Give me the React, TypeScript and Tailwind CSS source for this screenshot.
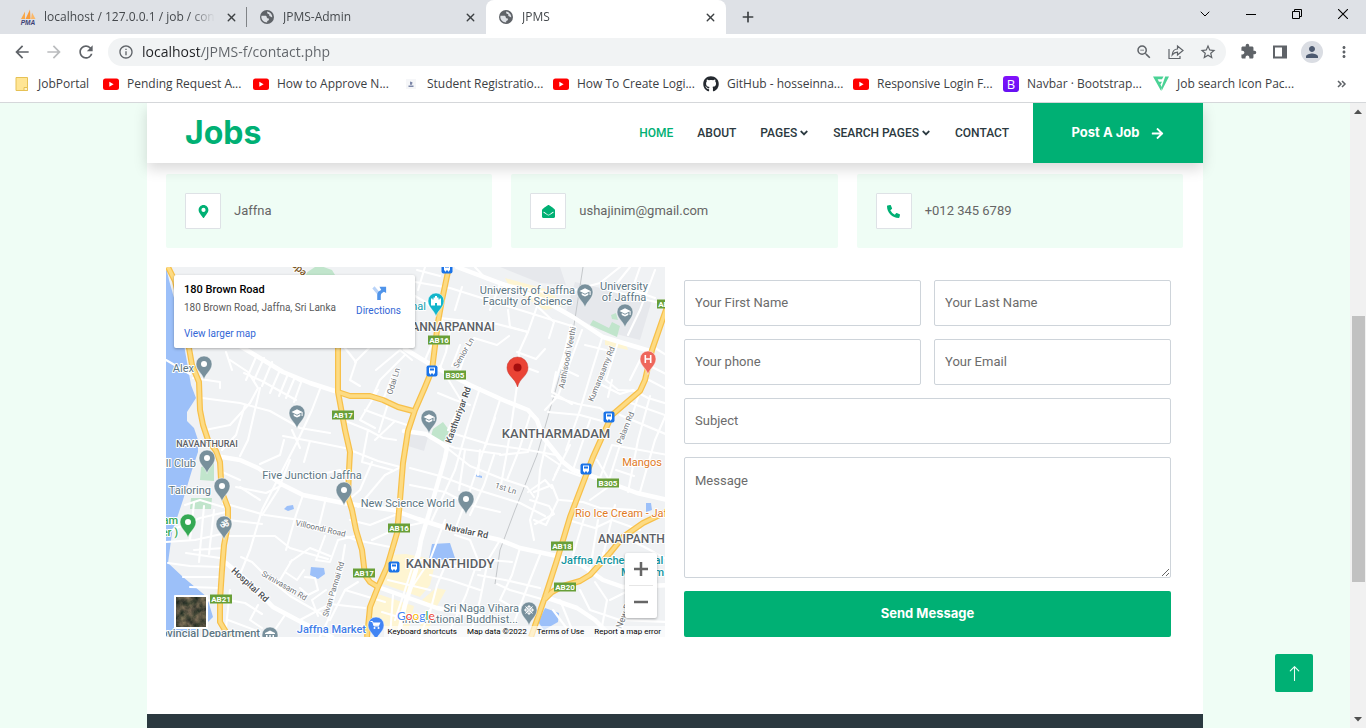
import type { ReactNode } from 'react';
import {
  MdArrowBack,
  MdArrowForward,
  MdRefresh,
  MdInfoOutline,
  MdZoomOut,
  MdStarBorder,
  MdExtension,
  MdPerson,
  MdMoreVert,
} from 'react-icons/md';
import { FaAngleDown, FaArrowRight, FaEnvelopeOpen, FaGithub, FaMapMarkerAlt, FaPhoneAlt } from 'react-icons/fa';
import { BsArrowUp } from 'react-icons/bs';
import { ChevronDown, Plus, X } from 'lucide-react';

/* ---------- Browser chrome ---------- */

function PmaIcon() {
  return (
    <svg viewBox="0 0 16 16" className="size-4 shrink-0" aria-hidden="true">
      <path d="M1 10 L5 2.500 L5 10 Z" fill="#f9a94b" />
      <path d="M5.500 10 L10 0.500 L10.500 10 Z" fill="#f89c3c" />
      <path d="M11 10 L12 3.500 L15.500 10 Z" fill="#fbb869" />
      <text x="8" y="15.500" textAnchor="middle" fontSize="6.500" fontWeight="700" fontStyle="italic" fill="#3b3f75" fontFamily="Liberation Sans, sans-serif">
        PMA
      </text>
    </svg>
  );
}

function GlobeIcon() {
  return (
    <svg viewBox="0 0 16 16" className="size-4 shrink-0" aria-hidden="true">
      <circle cx="8" cy="8" r="7" fill="#5f6368" />
      <path
        d="M2.500 6.800h3.700c1 0 1.600.6 1.600 1.500 0 .7.500 1.100 1.200 1.100h.9v1.200c0 .8-.8 1.400-1.700 1.400v1.500C4.800 13.400 2.400 11 2.300 8zM8.200 2.600c-.2 1.500.2 2.300 1.300 2.400.8.100.9.700.8 1.300-.1.800.4 1.100 1.100 1.100.9 0 1 .9 1.900.9 0-2.900-2-5.200-5.100-5.700z"
        fill="#dee1e6"
      />
    </svg>
  );
}

function Tab({ icon, title, active = false, divider = false }: { icon: ReactNode; title: string; active?: boolean; divider?: boolean }) {
  return (
    <div
      className={
        active
          ? 'flex h-[34px] w-60 items-center gap-2 rounded-t-lg bg-white pr-2 pl-3'
          : 'relative flex h-[34px] w-[239px] items-center gap-2 pr-2 pl-3'
      }
    >
      {icon}
      <span className="min-w-0 flex-1 overflow-hidden whitespace-nowrap text-xs text-[#45494d] [mask-image:linear-gradient(90deg,#000_85%,transparent)]">
        {title}
      </span>
      <button type="button" aria-label={'Close ' + title} className="flex size-4 items-center justify-center text-[#3c4043]">
        <X size={13} strokeWidth={2.5} />
      </button>
      {divider && <span className="absolute top-[7px] right-0 h-5 w-px bg-[#808387]" />}
    </div>
  );
}

function TabStrip() {
  return (
    <div className="flex h-[34px] bg-[#dee1e6] pl-2">
      <Tab icon={<PmaIcon />} title="localhost / 127.0.0.1 / job / contact" divider />
      <Tab icon={<GlobeIcon />} title="JPMS-Admin" />
      <Tab icon={<GlobeIcon />} title="JPMS" active />
      <button type="button" aria-label="New tab" className="flex w-11 items-center justify-center text-[#3c4043]">
        <Plus size={16} strokeWidth={2.5} />
      </button>
      <div className="ml-auto flex h-7 text-black">
        <button type="button" aria-label="Search tabs" className="flex w-[46px] items-center justify-center">
          <ChevronDown size={16} strokeWidth={1.5} />
        </button>
        <button type="button" aria-label="Minimize" className="flex w-[46px] items-center justify-center">
          <svg viewBox="0 0 10 10" className="size-[10px]"><path d="M0 5.500h10" stroke="currentColor" /></svg>
        </button>
        <button type="button" aria-label="Restore" className="flex w-[46px] items-center justify-center">
          <svg viewBox="0 0 10 10" className="size-[10px]" fill="none" stroke="currentColor">
            <path d="M.5 2.500h7v7h-7zM2.500 2.500v-2h7v7h-2" />
          </svg>
        </button>
        <button type="button" aria-label="Close window" className="flex w-[46px] items-center justify-center">
          <svg viewBox="0 0 10 10" className="size-[10px]"><path d="M0 0l10 10M10 0L0 10" stroke="currentColor" strokeWidth="1.100" /></svg>
        </button>
      </div>
    </div>
  );
}

function ToolButton({ label, children }: { label: string; children: ReactNode }) {
  return (
    <button type="button" aria-label={label} className="flex size-8 shrink-0 items-center justify-center text-[#5f6368]">
      {children}
    </button>
  );
}

function Toolbar() {
  return (
    <div className="flex h-[35px] items-center bg-white pr-[6px] pl-[6px]">
      <ToolButton label="Back"><MdArrowBack size={20} /></ToolButton>
      <ToolButton label="Forward"><MdArrowForward size={20} className="text-[#babcbe]" /></ToolButton>
      <ToolButton label="Reload"><MdRefresh size={20} /></ToolButton>
      <div className="ml-[6px] flex h-7 flex-1 items-center rounded-full bg-[#f1f3f4] pr-[2px] pl-[10px]">
        <MdInfoOutline size={16} className="shrink-0 text-[#5f6368]" />
        <input
          aria-label="Address"
          defaultValue="localhost/JPMS-f/contact.php"
          className="ml-2 min-w-0 flex-1 bg-[linear-gradient(90deg,#202124_57px,#5f6368_57px)] bg-clip-text text-sm text-transparent outline-none"
        />
        <ToolButton label="Zoom"><MdZoomOut size={18} /></ToolButton>
        <ToolButton label="Share">
          <svg viewBox="0 0 16 16" className="size-4" fill="none" stroke="currentColor" strokeWidth="1.200">
            <path d="M1 5v9.500h11V12M9.500 2v3C6 5 4.500 8 4.200 11c1.500-2 3-2.800 5.300-2.800v2.800L15 6.500z" />
          </svg>
        </ToolButton>
        <ToolButton label="Bookmark"><MdStarBorder size={18} /></ToolButton>
      </div>
      <div className="ml-[6px] flex">
        <ToolButton label="Extensions"><MdExtension size={17} /></ToolButton>
        <ToolButton label="Side panel">
          <svg viewBox="0 0 16 16" className="size-4"><path d="M1 1.500h14v13H1zM3 3.500v9h7v-9z" fill="currentColor" fillRule="evenodd" /></svg>
        </ToolButton>
        <ToolButton label="Profile">
          <span className="flex size-[22px] items-center justify-center rounded-full bg-[#dadde3] text-[#4d5a70]"><MdPerson size={18} /></span>
        </ToolButton>
        <ToolButton label="Menu"><MdMoreVert size={18} /></ToolButton>
      </div>
    </div>
  );
}

function YoutubeIcon() {
  return (
    <svg viewBox="0 0 16 16" className="size-4 shrink-0" aria-hidden="true">
      <rect x="0" y="2.500" width="16" height="11.500" rx="2.500" fill="#f00" />
      <path d="M6.300 5.800v4.900l4.300-2.450z" fill="#fff" />
    </svg>
  );
}

function StudentIcon() {
  return (
    <svg viewBox="0 0 16 16" className="size-4 shrink-0" aria-hidden="true">
      <rect x="3" y="3" width="10" height="10" fill="#f5f6f8" />
      <path d="M5.500 9.500h5v1.500h-5zM7 5.500l2.500.8-.5 2.500H7z" fill="#7d87a8" />
    </svg>
  );
}

function BootstrapIcon() {
  return (
    <span className="flex size-4 shrink-0 items-center justify-center rounded-[3px] bg-linear-to-b from-[#8211fb] to-[#6610f2] text-[13px] leading-4 text-white">B</span>
  );
}

function FlaticonIcon() {
  return (
    <svg viewBox="0 0 16 16" className="size-4 shrink-0" fill="#4ad295" aria-hidden="true">
      <path d="M0 .5h10.500L9 3.200H4.600L6 5.800h3L7.600 8.300H7.300L9 11.500 7.800 14.500z" />
      <path d="M12.200.5H16L8.600 15l-.2-3.500z" />
    </svg>
  );
}

const bookmarks: { title: string; icon: ReactNode }[] = [
  { title: 'Pending Request A...', icon: <YoutubeIcon /> },
  { title: 'How to Approve N...', icon: <YoutubeIcon /> },
  { title: 'Student Registratio...', icon: <StudentIcon /> },
  { title: 'How To Create Logi...', icon: <YoutubeIcon /> },
  { title: 'GitHub - hosseinna...', icon: <FaGithub size={16} className="shrink-0 text-[#24292f]" /> },
  { title: 'Responsive Login F...', icon: <YoutubeIcon /> },
  { title: 'Navbar · Bootstrap...', icon: <BootstrapIcon /> },
  { title: 'Job search Icon Pac...', icon: <FlaticonIcon /> },
];

function BookmarksBar() {
  return (
    <div className="flex h-[34px] items-center border-b border-[#d5d7da] bg-white pb-[3px] pl-[14px] text-xs whitespace-nowrap text-[#3c4043]">
      <a href="#jobportal" className="flex w-[89px] shrink-0 items-center gap-2">
        <svg viewBox="0 0 16 16" className="size-4" aria-hidden="true">
          <path d="M2 1.500h11.500v13H2z" fill="#ffe594" stroke="#e6c155" />
          <path d="M10 11.500h3.500v3H10z" fill="#fff3c7" stroke="#e6c155" />
        </svg>
        JobPortal
      </a>
      {bookmarks.map((b) => (
        <a key={b.title} href="#bookmark" className="flex w-[150px] shrink-0 items-center gap-2">
          {b.icon}
          {b.title}
        </a>
      ))}
      <button type="button" aria-label="More bookmarks" className="ml-auto flex w-12 items-center justify-center">
        <svg viewBox="0 0 10 8" className="h-2 w-[10px]" fill="none" stroke="#5f6368" strokeWidth="1.500">
          <path d="M1 1l3 3-3 3M5 1l3 3-3 3" />
        </svg>
      </button>
    </div>
  );
}

function Scrollbar() {
  return (
    <div className="flex w-4 shrink-0 flex-col items-center bg-[#f1f1f1]" aria-hidden="true">
      <svg viewBox="0 0 16 17" className="h-[17px] w-4"><path d="M4 11h8L8 6.500z" fill="#505050" /></svg>
      <div className="flex-[196]" />
      <div className="w-[13px] flex-[266] bg-[#c1c1c1]" />
      <div className="flex-[129]" />
      <svg viewBox="0 0 16 17" className="h-[17px] w-4"><path d="M4 6h8l-4 4.500z" fill="#505050" /></svg>
    </div>
  );
}

/* ---------- Map ---------- */

const coast =
  'M166 267L169 280L176 305L184 345L191 385L196 398L187 412L187 421L194 428L198 440L198 452L192 470L183 500L172 533L168 563L183 577L207 597L213 617L205 625L182 637L166 637Z';

const highways = [
  'M168 267L175 281L182 312L189 348L192 365L199 382L200 410L203 425L208 440L216 451L220 462L221 480L223 495L228 508L228 525L224 545L222 570L220 600L220 622L229 637',
  'M338 340L338 392L345 430L350 452L349 470L348 497L352 510L356 530L362 550L365 575L370 582L378 587',
  'M338 392L350 396L370 396L383 400L398 407L413 411',
  'M449 267L442 300L438 322L432 370L425 387L415 410L408 431L403 463L400 500L397 533L387 567L378 587L370 607L367 637',
  'M668 304L652 350L645 380L640 391L612 415L593 457L570 517L557 560L545 597L531 637',
  'M545 599L552 592L563 586L580 581L590 575L610 553L623 537L643 523L668 511',
];

const avenues = [
  'M240 346L283 372L310 383L338 392',
  'M457 267L510 287L543 300L573 317L603 337L650 351',
  'M405 349L433 366L470 385L503 400L528 410L537 420L543 437L563 462L573 470L597 478L637 493L668 500',
  'M216 456L240 460L258 468L283 485L303 495L343 503L393 510L418 519L443 527L500 540L520 548L557 556',
  'M404 431L426 434L441 443L447 448L445 458L430 510L421 540L416 570L405 605L398 637',
  'M226 563L250 583L273 607L303 623L332 637',
  'M378 587L420 602L437 608L480 616',
  'M557 557L580 564L603 580L623 587L668 585',
  'M545 597L577 608L595 620L612 637',
];

const streets = [
  'M415 296L427 303L440 318L475 322L497 324L528 332',
  'M415 282L450 288L520 310L575 327',
  'M475 267L486 279L530 290L560 294L600 283L620 267',
  'M540 298L528 332L519 352L517 386L512 420L507 452L500 490',
  'M517 352L536 359L545 349M519 365L538 372',
  'M536 305L554 322L549 338M528 332L510 327L508 310',
  'M440 318L450 330L446 352L440 368M446 330L462 320',
  'M455 365L474 338L497 345L509 336',
  'M440 366L462 402L448 430M480 388L468 425L455 470L432 520',
  'M438 393L455 400L470 405M500 400L487 440L470 490L455 530',
  'M455 434L488 444L528 450L556 455M465 450L459 490',
  'M495 418L485 447M531 412L519 450L507 480M547 439L540 470L538 496',
  'M552 396L578 404L600 408L612 417M545 410L558 396L569 366',
  'M556 372L552 392L572 404M568 350L561 368L578 376',
  'M571 325L564 354L552 392M602 338L592 370L580 410L566 450',
  'M582 330L568 368M618 342L606 380L618 390L640 391',
  'M600 384L620 394L633 390L648 398L668 404M612 380L608 397',
  'M548 412L580 415L602 421M640 391L632 416L620 445L609 480',
  'M620 415L668 435M628 402L665 415M650 396L638 440L628 492',
  'M573 470L590 420M580 476L563 470M600 478L612 445L640 450L668 455',
  'M640 492L655 440L668 410M597 460L608 478M616 470L634 476',
  'M166 360L190 374M193 378L220 382L220 388M202 398L240 403L270 411L300 428L330 433',
  'M205 430L230 425L250 403L258 388L248 372L230 360M232 370L226 352',
  'M248 350L256 357L246 380M264 358L254 380M272 362L262 386M280 370L270 393M288 374L279 396M295 377L286 398M302 380L294 402',
  'M244 373L262 381L296 400M255 356L300 381',
  'M320 389L312 410L298 440L280 475L262 510L250 550L241 572',
  'M245 405L236 435L222 450M260 388L248 440L240 456',
  'M283 436L310 441L345 448M310 441L304 462M300 448L292 430',
  'M338 418L368 430L383 438L396 440M368 430L362 462L392 470',
  'M350 450L378 461L404 468M372 462L360 490L345 503',
  'M345 348L356 362L350 380L360 386M355 362L372 345M376 370L400 350L412 360',
  'M372 398L380 380L405 355M383 400L392 377M365 410L392 420L410 426M375 440L394 422',
  'M389 400L379 432M378 390L360 420L375 428',
  'M447 448L470 466L500 478L527 487L534 497',
  'M223 503L265 515L300 520L328 530L356 540L395 548',
  'M228 520L262 524M226 536L252 536L275 536L290 548L310 554L328 559',
  'M260 464L280 455L284 440M283 485L266 493L236 487',
  'M290 460L278 490L262 515M303 495L296 515L286 550M326 498L318 530',
  'M303 478L340 470L346 483M240 480L222 472M240 487L260 500',
  'M166 542L195 540L226 533M172 530L200 518L226 512M185 505L200 500L223 507',
  'M194 503L190 540M204 506L199 562M214 510L209 554M186 553L220 558M194 550L224 548',
  'M168 563L190 566L222 567M183 577L222 577M190 587L221 588M200 600L220 601',
  'M241 557L252 562L268 578L290 596L325 616M280 580L292 560M290 562L310 548L330 556',
  'M300 588L308 595L318 590L315 578L305 577M285 572L297 580L304 570',
  'M325 536L316 560L330 562L338 540L355 536M345 545L340 575L328 620L320 637',
  'M330 620L345 590L358 582M300 620L330 604L365 608M345 590L385 602',
  'M318 616L312 600L326 590M270 637L285 615M258 605L250 620L262 628',
  'M228 600L245 603L262 614M228 620L260 632M230 590L225 637',
  'M372 540L398 528L425 522M350 520L370 525L395 515M358 507L385 475L405 465',
  'M410 468L440 476L478 490L520 503L545 516M410 485L445 492L470 505L500 512',
  'M430 438L455 448L500 454M480 450L478 475M500 455L528 452L532 440',
  'M494 455L484 485L470 515M538 495L530 520L534 540M534 492L552 485L558 500L546 525L534 520',
  'M528 492L545 480L552 488M530 500L549 506L554 514L535 524M553 480L560 465L545 455',
  'M500 540L488 560L480 600L470 637M520 548L512 575L500 600M478 575L505 580L540 588',
  'M455 535L470 540L478 560L466 595L450 630M430 575L450 580L480 590M420 560L480 570',
  'M497 584L510 590L545 600M500 600L518 610M490 560L512 562M540 555L530 580L515 620',
  'M445 566L437 585L430 612M410 590L430 560L445 520M422 537L405 590L395 620',
  'M388 580L430 590M393 595L390 637M405 600L400 620M382 612L415 622M430 610L420 637',
  'M555 475L570 445M560 500L583 502L600 508L635 510M590 500L618 480',
  'M568 520L595 528L612 520L640 530M585 515L573 555M598 520L590 570M615 505L602 560',
  'M625 537L650 550L668 560M603 553L613 565L630 560M580 590L590 610L620 620L668 622',
  'M595 582L607 600L600 637M610 600L630 590L650 590M618 637L630 605M560 600L575 637M553 610L568 630',
  'M610 290L630 296L668 305M640 267L632 290L655 298M655 270L640 310L628 335M664 318L655 345M630 267L618 282',
  'M417 270L440 276M425 267L418 290M462 287L455 310M500 284L490 310M435 337L425 360M460 345L452 366M467 348L460 370',
  'M640 360L630 380M655 348L668 356M648 365L668 375M649 380L668 390M606 350L585 345',
];

function Badge({ x, y, label }: { x: number; y: number; label: string }) {
  const w = label.length * 6 - 2;
  return (
    <g>
      <rect x={x - w / 2} y={y - 4.5} width={w} height="9" fill="#689f38" />
      <text x={x} y={y + 3} textAnchor="middle" fontSize="8" fontWeight="700" fill="#fff">{label}</text>
    </g>
  );
}

function Bus({ x, y }: { x: number; y: number }) {
  return (
    <g transform={`translate(${x} ${y})`}>
      <rect x="-5.500" y="-5.500" width="11" height="11" rx="2" fill="#1a73e8" />
      <path d="M-3 -3.500h6v6h-1v1h-1v-1h-2v1h-1v-1h-1zM-2 -2.500v2h4v-2z" fill="#fff" fillRule="evenodd" />
    </g>
  );
}

type Glyph = 'dot' | 'cap' | 'h' | 'tower' | 'om' | 'wheel' | 'cart' | 'museum';

function PinGlyph({ glyph, color }: { glyph: Glyph; color: string }) {
  switch (glyph) {
    case 'dot':
      return <circle r="3" fill="#fff" />;
    case 'cap':
      return <path d="M0 -3.800L5.500 -1L0 1.800L-5.500 -1ZM-3.300 1L0 2.800L3.300 1V3L0 4.500L-3.300 3ZM4.600 -1h1v4h-1z" fill="#fff" />;
    case 'h':
      return <path d="M-3.500 -4h1.600v3.200h3.800v-3.200h1.600v8h-1.600v-3.200h-3.800v3.200h-1.600z" fill="#fff" />;
    case 'tower':
      return <path d="M-5 -2.500h1.500v1h1v-2h1.500v-1.500h2v1.500h1.500v2h1v-1h1.500v7h-4v-2.500h-2v2.500h-4z" fill="#fff" />;
    case 'om':
      return <text y="4" textAnchor="middle" fontSize="10" fontWeight="700" fill="#fff" fontFamily="DejaVu Sans, sans-serif">ॐ</text>;
    case 'wheel':
      return (
        <g stroke="#fff" fill="none">
          <circle r="3.500" />
          <path d="M-5 0H5M0 -5V5M-3.500 -3.500L3.500 3.500M3.500 -3.500L-3.500 3.500" />
          <circle r="1" fill={color} />
        </g>
      );
    case 'cart':
      return (
        <g>
          <path d="M-5.500 -3.500h2l1.600 4.500h4.900" stroke="#fff" fill="none" />
          <path d="M-3 -2.500h7.500l-1.500 3.200h-5z" fill="#fff" />
          <circle cx="-1.500" cy="3" r="1" fill="#fff" />
          <circle cx="2.500" cy="3" r="1" fill="#fff" />
        </g>
      );
    case 'museum':
      return <path d="M0 -4.500L5 -2v1h-10v-1zM-4 0h1.500v4h-1.500zM-.75 0h1.500v4h-1.500zM2.500 0h1.500v4h-1.500z" fill="#fff" />;
  }
}

function Pin({ x, y, color = '#78909c', glyph }: { x: number; y: number; color?: string; glyph: Glyph }) {
  return (
    <g transform={`translate(${x} ${y})`}>
      <path d="M0 15.500C-1.500 9.500 -8 6.500 -8 0A8 8 0 1 1 8 0C8 6.500 1.500 9.500 0 15.500Z" fill={color} stroke="#fff" strokeWidth="0.500" />
      <PinGlyph glyph={glyph} color={color} />
    </g>
  );
}

interface Label {
  t: string;
  x: number;
  y: number;
  c?: string;
  s?: number;
  w?: number;
  a?: 'start' | 'middle' | 'end';
  r?: number;
}

const slate = '#5c7683';
const ink = '#5b6065';

const labels: Label[] = [
  { t: 'University of Jaffna', x: 575, y: 294, a: 'end', c: slate },
  { t: 'Faculty of Science', x: 572, y: 305, a: 'end', c: slate },
  { t: 'University', x: 624, y: 290, c: slate },
  { t: 'of Jaffna', x: 624, y: 301, c: slate },
  { t: 'Mahal', x: 426, y: 310, a: 'end', c: '#129eaf' },
  { t: 'VANNARPANNAI', x: 495, y: 331, a: 'end', c: ink, w: 500, s: 12 },
  { t: 'KANTHARMADAM', x: 556, y: 438, c: ink, w: 500, s: 13 },
  { t: 'KANNATHIDDY', x: 450, y: 568, c: ink, w: 500, s: 13 },
  { t: 'NAVANTHURAI', x: 207, y: 447, c: ink, w: 500, s: 9 },
  { t: 'ANAIPANTHY', x: 598, y: 543, a: 'start', c: ink, w: 500, s: 12 },
  { t: 'Alex', x: 194, y: 372, a: 'end', c: slate },
  { t: 'Basketball Club', x: 196, y: 467, a: 'end', c: slate },
  { t: 'Tailoring', x: 211, y: 494, a: 'end', c: slate },
  { t: 'Five Junction Jaffna', x: 312, y: 479, c: slate },
  { t: 'New Science World', x: 455, y: 507, a: 'end', c: slate },
  { t: 'am', x: 178, y: 524, a: 'end', c: '#34a853', w: 500 },
  { t: 'er )', x: 178, y: 536, a: 'end', c: '#34a853', w: 500 },
  { t: 'Jaffna Market', x: 366, y: 633, a: 'end', c: '#3f7de8', w: 500 },
  { t: 'Provincial Department', x: 260, y: 637, a: 'end', c: slate, w: 500 },
  { t: 'Sri Naga Vihara', x: 519, y: 612, a: 'end', c: slate },
  { t: 'International Buddhist...', x: 518, y: 623, a: 'end', c: slate },
  { t: 'Mangos', x: 662, y: 466, a: 'end', c: '#e07a1f' },
  { t: 'Rio Ice Cream - Jaffna', x: 575, y: 517, a: 'start', c: '#e07a1f' },
  { t: 'Jaffna Archeological', x: 561, y: 564, a: 'start', c: '#12959f', w: 500 },
  { t: 'Museum', x: 621, y: 576, a: 'start', c: '#12959f', w: 500 },
  { t: 'Senior Ln', x: 466, y: 354, r: -60, c: '#70757a', s: 8 },
  { t: 'Kasthuriyar Rd', x: 461, y: 416, r: -70, c: '#4a4e52', s: 9, w: 500 },
  { t: 'Aathisoodi Veethi', x: 570, y: 358, r: -79, c: '#70757a', s: 8 },
  { t: 'Kumarasamy Rd', x: 604, y: 375, r: -68, c: '#70757a', s: 8 },
  { t: 'Palam Rd', x: 628, y: 429, r: -68, c: '#70757a', s: 8 },
  { t: 'Odai Ln', x: 396, y: 382, r: -73, c: '#70757a', s: 8 },
  { t: 'Villoondi Road', x: 320, y: 531, r: 13, c: '#70757a', s: 8 },
  { t: 'Srinivasam Rd', x: 283, y: 588, r: 30, c: '#70757a', s: 8 },
  { t: 'Sivan Pannai Rd', x: 336, y: 590, r: -73, c: '#70757a', s: 8 },
  { t: 'Hospital Rd', x: 248, y: 587, r: 42, c: '#4a4e52', s: 9, w: 500 },
  { t: 'Navalar Rd', x: 466, y: 534, r: 12, c: '#4a4e52', s: 9, w: 500 },
  { t: '1st Ln', x: 505, y: 491, r: 18, c: '#70757a', s: 8 },
  { t: 'New Rd', x: 627, y: 615, r: -68, c: '#70757a', s: 9 },
  { t: 'Spa', x: 297, y: 271, r: 42, c: '#7a5423', s: 10, w: 500 },
];

function MapDrawing() {
  return (
    <svg
      viewBox="166 267 499 370"
      preserveAspectRatio="xMidYMid slice"
      className="block h-full w-full"
      role="img"
      aria-label="Map of Jaffna around 180 Brown Road"
      fontFamily="Roboto, sans-serif"
    >
      <defs>
        <filter id="terrain" x="0" y="0" width="100%" height="100%" colorInterpolationFilters="sRGB">
          <feTurbulence type="fractalNoise" baseFrequency="0.15" numOctaves="4" seed="4" />
          <feColorMatrix values="0.600 0 0 0 0.020  0.450 0.050 0 0 0.060  0.350 0 0 0 0.070  0 0 0 0 1" />
        </filter>
      </defs>
      <rect x="166" y="267" width="499" height="370" fill="#f0f2f4" />
      <path d="M575 282L652 300L640 340L600 330L566 312ZM500 267L560 267L566 285L540 283ZM410 430L428 437L424 451L408 446Z" fill="#e6e8ec" />
      <path d="M388 555L406 554L436 560L430 585L420 597L380 583ZM372 592L414 606L408 632L372 626ZM422 600L436 588L446 590L436 608ZM428 612L436 616L426 632L418 630Z M505 278L545 289L566 305L545 310L510 288Z M605 338L626 344L628 350L605 345Z" fill="#fef5d2" />
      <path d="M303 275L318 265L332 270L338 280ZM201 467L214 462L214 481L200 480ZM191 498L212 498L211 509L190 509ZM593 320L609 328L612 322L620 326L617 337L590 325ZM433 429L443 422L449 430L446 441L438 442L431 436ZM611 315L616 313L618 320L612 319Z" fill="#c1e5cc" />
      <path d={coast} fill="#9cc0f9" />
      <path d="M287 506L293 505L294 509L288 511L284 509ZM311 567L324 568L325 574L318 579L310 575ZM432 544L450 543L455 558L440 560L429 559ZM545 608L559 613L558 622L544 630L538 622ZM646 503L651 503L652 510L646 512ZM474 474L482 476L482 478L474 476Z" fill="#9cc0f9" />
      <path d="M583 267L574 325L557 385L537 455L515 510L500 550L495 584" fill="none" stroke="#c4c7ca" strokeWidth="1" />
      <g fill="none" stroke="#fff" strokeLinejoin="round" strokeLinecap="round">
        {streets.map((d) => <path key={d} d={d} strokeWidth="2.100" />)}
        {avenues.map((d) => <path key={d} d={d} strokeWidth="4.500" />)}
      </g>
      <g fill="none" strokeLinejoin="round">
        {highways.map((d) => <path key={d} d={d} stroke="#f7c04a" strokeWidth="6" />)}
        {highways.map((d) => <path key={d + 'i'} d={d} stroke="#fddb83" strokeWidth="3.500" />)}
      </g>
      {labels.map((l) => (
        <text
          key={l.t}
          x={l.x}
          y={l.y}
          transform={l.r ? `rotate(${l.r} ${l.x} ${l.y})` : undefined}
          textAnchor={l.a ?? 'middle'}
          fontSize={l.s ?? 11}
          fontWeight={l.w ?? 400}
          fill={l.c}
          stroke="#fff"
          strokeWidth="2"
          strokeLinejoin="round"
          paintOrder="stroke"
        >
          {l.t}
        </text>
      ))}
      <Badge x={439} y={340} label="AB16" />
      <Badge x={455} y={375} label="B305" />
      <Badge x={343} y={415} label="AB17" />
      <Badge x={399} y={528} label="AB16" />
      <Badge x={364} y={573} label="AB17" />
      <Badge x={221} y={599} label="AB21" />
      <Badge x={562} y={546} label="AB18" />
      <Badge x={565} y={587} label="AB20" />
      <Badge x={608} y={483} label="B305" />
      <Badge x={668} y={304} label="AB18" />
      <Bus x={447} y={268} />
      <Bus x={432} y={371} />
      <Bus x={609} y={417} />
      <Bus x={586} y={469} />
      <Bus x={394} y={567} />
      <Pin x={436} y={301} color="#12b5cb" glyph="tower" />
      <Pin x={585} y={292} glyph="cap" />
      <Pin x={625} y={312} glyph="cap" />
      <Pin x={297} y={413} glyph="cap" />
      <Pin x={429} y={418} glyph="cap" />
      <Pin x={648} y={359} color="#ee675c" glyph="h" />
      <Pin x={204} y={364} glyph="dot" />
      <Pin x={207} y={458} glyph="dot" />
      <Pin x={222} y={486} glyph="dot" />
      <Pin x={344} y={490} glyph="dot" />
      <Pin x={466} y={499} glyph="dot" />
      <Pin x={188} y={522} color="#34a853" glyph="dot" />
      <Pin x={224} y={524} glyph="om" />
      <Pin x={529} y={610} glyph="wheel" />
      <Pin x={376} y={625} color="#4285f4" glyph="cart" />
      <Pin x={270} y={635} glyph="museum" />
      <path d="M517.500 387C515.500 378 507 376 507 367.500A10.500 10.500 0 1 1 528 367.500C528 376 519.500 378 517.500 387Z" fill="#ea4335" stroke="#c5352a" strokeWidth="0.500" />
      <circle cx="517.500" cy="367.500" r="4" fill="#a50e0e" />
      <g stroke="#fff" strokeWidth="2" paintOrder="stroke" fontFamily="Lato, sans-serif" fontSize="12" fontWeight="400">
        <text x="397" y="620">
          <tspan fill="#4285f4">G</tspan><tspan fill="#ea4335">o</tspan><tspan fill="#fbbc05">o</tspan><tspan fill="#4285f4">g</tspan><tspan fill="#34a853">l</tspan><tspan fill="#ea4335">e</tspan>
        </text>
      </g>
      <rect x="174" y="595" width="34" height="34" rx="1" fill="#fff" />
      <rect x="176" y="597" width="30" height="30" filter="url(#terrain)" />
    </svg>
  );
}

function MapPanel() {
  return (
    <section aria-label="Location" className="relative h-[370px] overflow-hidden">
      <MapDrawing />
      <div className="absolute top-2 left-2 flex h-[73px] w-[241px] justify-between rounded-[2px] bg-white px-[10px] py-2 shadow-[0_1px_3px_rgba(0,0,0,0.300)]">
        <div className="flex flex-col">
          <span className="text-[11px] leading-[14px] font-medium text-black">180 Brown Road</span>
          <span className="mt-1 text-[10px] leading-[14px] text-[#5b5b5b]">180 Brown Road, Jaffna, Sri Lanka</span>
          <a href="#map" className="mt-auto text-[10px] leading-3 text-[#3367d6]">View larger map</a>
        </div>
        <a href="#directions" className="mr-1 flex flex-col items-center text-[10px] leading-3 text-[#3367d6]">
          <svg viewBox="0 0 18 18" className="mt-[2px] mb-1 size-4" aria-hidden="true">
            <path d="M1.500 4L4 1.500L9.500 8L7.500 11Z" fill="#b9d3f8" />
            <path d="M7 17V11C7 8 9 6.500 11.500 5.500L9.500 2H17V9L14.500 7.500C12 9 11 10 11 12V17Z" fill="#4f94ea" />
          </svg>
          Directions
        </a>
      </div>
      <div className="absolute right-2 bottom-[19px] flex h-[65px] w-8 flex-col rounded-[2px] bg-white px-1 text-[#666] shadow-[0_1px_3px_rgba(0,0,0,0.300)]">
        <button type="button" aria-label="Zoom in" className="flex flex-1 items-center justify-center border-b border-[#e6e6e6]">
          <svg viewBox="0 0 14 14" className="size-[14px]"><path d="M0 7h14M7 0v14" stroke="currentColor" strokeWidth="2.500" /></svg>
        </button>
        <button type="button" aria-label="Zoom out" className="flex flex-1 items-center justify-center">
          <svg viewBox="0 0 14 14" className="size-[14px]"><path d="M0 7h14" stroke="currentColor" strokeWidth="2.500" /></svg>
        </button>
      </div>
      <div className="absolute right-0 bottom-0 flex gap-[10px] bg-white/60 pr-1 pl-1 text-[8px] leading-[11px] text-black">
        <button type="button">Keyboard shortcuts</button>
        <span>Map data ©2022</span>
        <a href="#terms">Terms of Use</a>
        <a href="#report">Report a map error</a>
      </div>
    </section>
  );
}

/* ---------- Contact page ---------- */

function NavBar() {
  return (
    <header className="relative z-10 flex h-[60px] items-stretch bg-white shadow-[0_6px_13px_rgba(0,0,0,0.150)]">
      <a href="#home" className="flex items-center pl-[38px] font-[Inter,sans-serif] text-[32px] leading-10 font-bold text-[#00b074]">Jobs</a>
      <nav className="ml-auto flex items-center gap-6 pr-6 text-xs font-medium text-[#2b3940]">
        <a href="#home" className="text-[#00b074]">HOME</a>
        <a href="#about">ABOUT</a>
        <a href="#pages" className="flex items-center gap-px">PAGES<FaAngleDown size={12} className="-mr-px" /></a>
        <a href="#search" className="flex items-center gap-px">SEARCH PAGES<FaAngleDown size={12} className="-mr-px" /></a>
        <a href="#contact">CONTACT</a>
      </nav>
      <a href="#post" className="flex w-[170px] items-center justify-center gap-3 bg-[#00b074] font-[Inter,sans-serif] text-[13px] font-bold text-white">
        Post A Job
        <FaArrowRight size={13} />
      </a>
    </header>
  );
}

function InfoCard({ icon, text }: { icon: ReactNode; text: string }) {
  return (
    <div className="flex h-[74px] items-center gap-[13px] rounded-[2px] bg-[#effdf5] px-[19px]">
      <span className="flex size-9 items-center justify-center rounded-[1px] border border-[#dee2e6] bg-white text-[#00b074]">{icon}</span>
      <span>{text}</span>
    </div>
  );
}

const fieldClass =
  'w-full min-w-0 rounded-[2px] border border-[#ced4da] bg-white px-[10px] text-[13px] text-[#666565] outline-none placeholder:text-[#6c6c6c]';

function ContactForm() {
  return (
    <form className="grid grid-cols-2 gap-[13px] pt-[13px] pr-3" onSubmit={(e) => e.preventDefault()}>
      <input aria-label="Your First Name" placeholder="Your First Name" className={fieldClass + ' h-[46px] pb-[2px]'} />
      <input aria-label="Your Last Name" placeholder="Your Last Name" className={fieldClass + ' h-[46px] pb-[2px]'} />
      <input aria-label="Your phone" type="tel" placeholder="Your phone" className={fieldClass + ' h-[46px] pb-[2px]'} />
      <input aria-label="Your Email" type="email" placeholder="Your Email" className={fieldClass + ' h-[46px] pb-[2px]'} />
      <input aria-label="Subject" placeholder="Subject" className={fieldClass + ' col-span-2 h-[46px] pb-[2px]'} />
      <textarea aria-label="Message" placeholder="Message" className={fieldClass + ' col-span-2 block h-[121px] resize py-[13px] leading-5'} />
      <button type="submit" className="col-span-2 h-[46px] rounded-[2px] bg-[#00b074] font-[Inter,sans-serif] text-[13px] font-bold text-white">
        Send Message
      </button>
    </form>
  );
}

export default function App() {
  return (
    <div className="flex h-screen flex-col overflow-hidden font-['Open_Sans',sans-serif]">
      <TabStrip />
      <Toolbar />
      <BookmarksBar />
      <div className="flex min-h-0 flex-1">
        <div className="relative min-w-0 flex-1 overflow-hidden bg-[#effdf5] font-[Roboto,sans-serif] text-[13px] text-[#666565]">
          <div className="mx-auto flex min-h-full max-w-[1056px] flex-col bg-white">
            <NavBar />
            <main className="flex flex-col gap-[19px] pt-[11px] pr-5 pb-[77px] pl-[19px]">
              <div className="grid grid-cols-3 gap-[19px]">
                <InfoCard icon={<FaMapMarkerAlt size={13} />} text="Jaffna" />
                <InfoCard icon={<FaEnvelopeOpen size={13} />} text="ushajinim@gmail.com" />
                <InfoCard icon={<FaPhoneAlt size={13} />} text="+012 345 6789" />
              </div>
              <div className="grid grid-cols-2 gap-[19px]">
                <MapPanel />
                <ContactForm />
              </div>
            </main>
            <footer className="flex-1 bg-[#2b3940]" />
          </div>
          <a href="#top" aria-label="Back to top" className="absolute right-[37px] bottom-9 flex size-[38px] items-center justify-center rounded-[2px] bg-[#00b074] text-[#effdf5]">
            <BsArrowUp size={17} />
          </a>
        </div>
        <Scrollbar />
      </div>
    </div>
  );
}
